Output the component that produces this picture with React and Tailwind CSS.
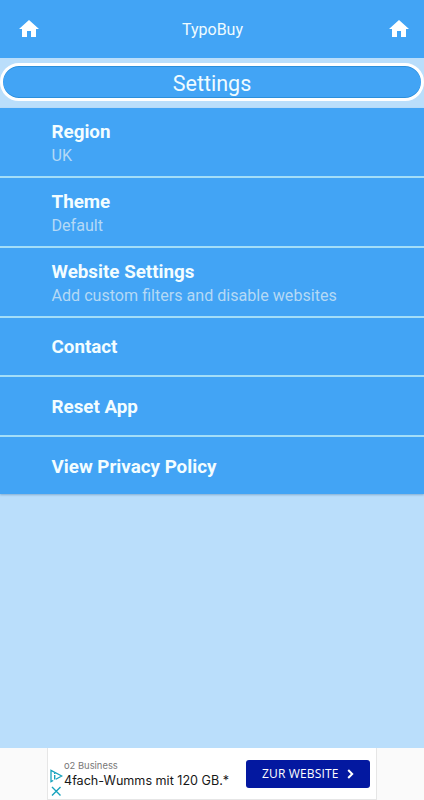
import React from "react";
import { MdHome } from "react-icons/md";

const settings = [
  { title: "Region", value: "UK", size: "h-[70px] border-b-2 pt-[12px]" },
  { title: "Theme", value: "Default", size: "h-[70px] border-b-2 pt-[12px]" },
  {
    title: "Website Settings",
    value: "Add custom filters and disable websites",
    size: "h-[70px] border-b-2 pt-[12px]",
  },
  { title: "Contact", size: "h-[59px] border-b-2 pt-[17px]" },
  { title: "Reset App", size: "h-[60px] border-b-2 pt-[18px]" },
  { title: "View Privacy Policy", size: "h-[57px] pt-[18px]" },
];

export default function App() {
  return (
    <div className="flex h-[800px] w-[424px] flex-col overflow-hidden bg-[#badefb] font-['Roboto',sans-serif]">
      <header className="flex h-[58px] shrink-0 items-center bg-[#42a4f5] pr-[13px] pl-[17px] text-white">
        <MdHome className="size-6" />
        <h1 className="flex-1 pt-[2px] pr-[3px] text-center text-[16px] leading-6 text-[#effbff]">
          TypoBuy
        </h1>
        <MdHome className="size-6" />
      </header>

      <div className="h-[50px] shrink-0 pt-[5px]">
        <div className="flex h-[38px] items-center justify-center rounded-full border-[3px] border-white bg-[#42a4f5] shadow-[inset_0_1px_0_#2b8fdc,inset_0_-1px_0_#2b8fdc]">
          <h2 className="pt-[3px] text-[21.5px] leading-6 text-[#effbff]">
            Settings
          </h2>
        </div>
      </div>

      <main className="shrink-0 shadow-[0_1px_2px_rgba(0,60,110,0.3)]">
        {settings.map((item) => (
          <SettingRow key={item.title} item={item} />
        ))}
      </main>

      <AdBanner />
    </div>
  );
}

const SettingRow = ({ item }) => (
  <div className={`border-[#a3def8] bg-[#42a4f5] pl-[51.5px] ${item.size}`}>
    <p className="text-[18.8px] leading-6 font-bold text-[#f3fdff]">
      {item.title}
    </p>
    {item.value && (
      <p className="text-[16.1px] leading-6 text-[#b4d9f5]">{item.value}</p>
    )}
  </div>
);

/* Sponsored banner at the bottom */
const AdBanner = () => (
  <footer className="mt-auto flex h-[52px] shrink-0 justify-center bg-[#fafafa]">
    <div className="flex h-[52px] w-[330px] border-x border-b border-[#e6e6e6] bg-white">
      <div className="flex w-[16px] shrink-0 flex-col items-start pt-[21px] pl-[2px]">
        <svg width="13" height="14" viewBox="0 0 13 14" fill="none">
          <path
            d="M3.2 11.5L1 12.6V1.4L11.8 7 5.8 10.2"
            stroke="#16a3bd"
            strokeWidth="1.3"
          />
          <path d="M4.7 5.9v4.6M4.7 3.8v1.3" stroke="#16a3bd" strokeWidth="1.4" />
        </svg>
        <svg
          width="11"
          height="11"
          viewBox="0 0 11 11"
          className="mt-[3px] ml-px"
        >
          <path
            d="M1 1l8.5 8.5M9.5 1L1 9.5"
            stroke="#16a3bd"
            strokeWidth="1.4"
          />
        </svg>
      </div>
      <div className="w-[182px] shrink-0 pt-[12px] font-['Inter',sans-serif] whitespace-nowrap">
        <p className="text-[9.4px] leading-3 text-[#777777]">o2 Business</p>
        <p className="pt-px text-[12.6px] leading-[15px] text-[#171717]">
          4fach-Wumms mit 120 GB.*
        </p>
      </div>
      <button className="mt-[12px] flex h-[28px] w-[124px] items-center rounded-[3px] bg-[#0318a0] pl-[16px] font-['Open_Sans',sans-serif] text-[12px] font-medium text-white">
        <span className="whitespace-nowrap tracking-[0.15px]">ZUR WEBSITE</span>
        <svg
          width="7"
          height="10"
          viewBox="0 0 7 10"
          fill="none"
          className="ml-2"
        >
          <path d="M1.2 1l4 4-4 4" stroke="white" strokeWidth="2" />
        </svg>
      </button>
    </div>
  </footer>
);
